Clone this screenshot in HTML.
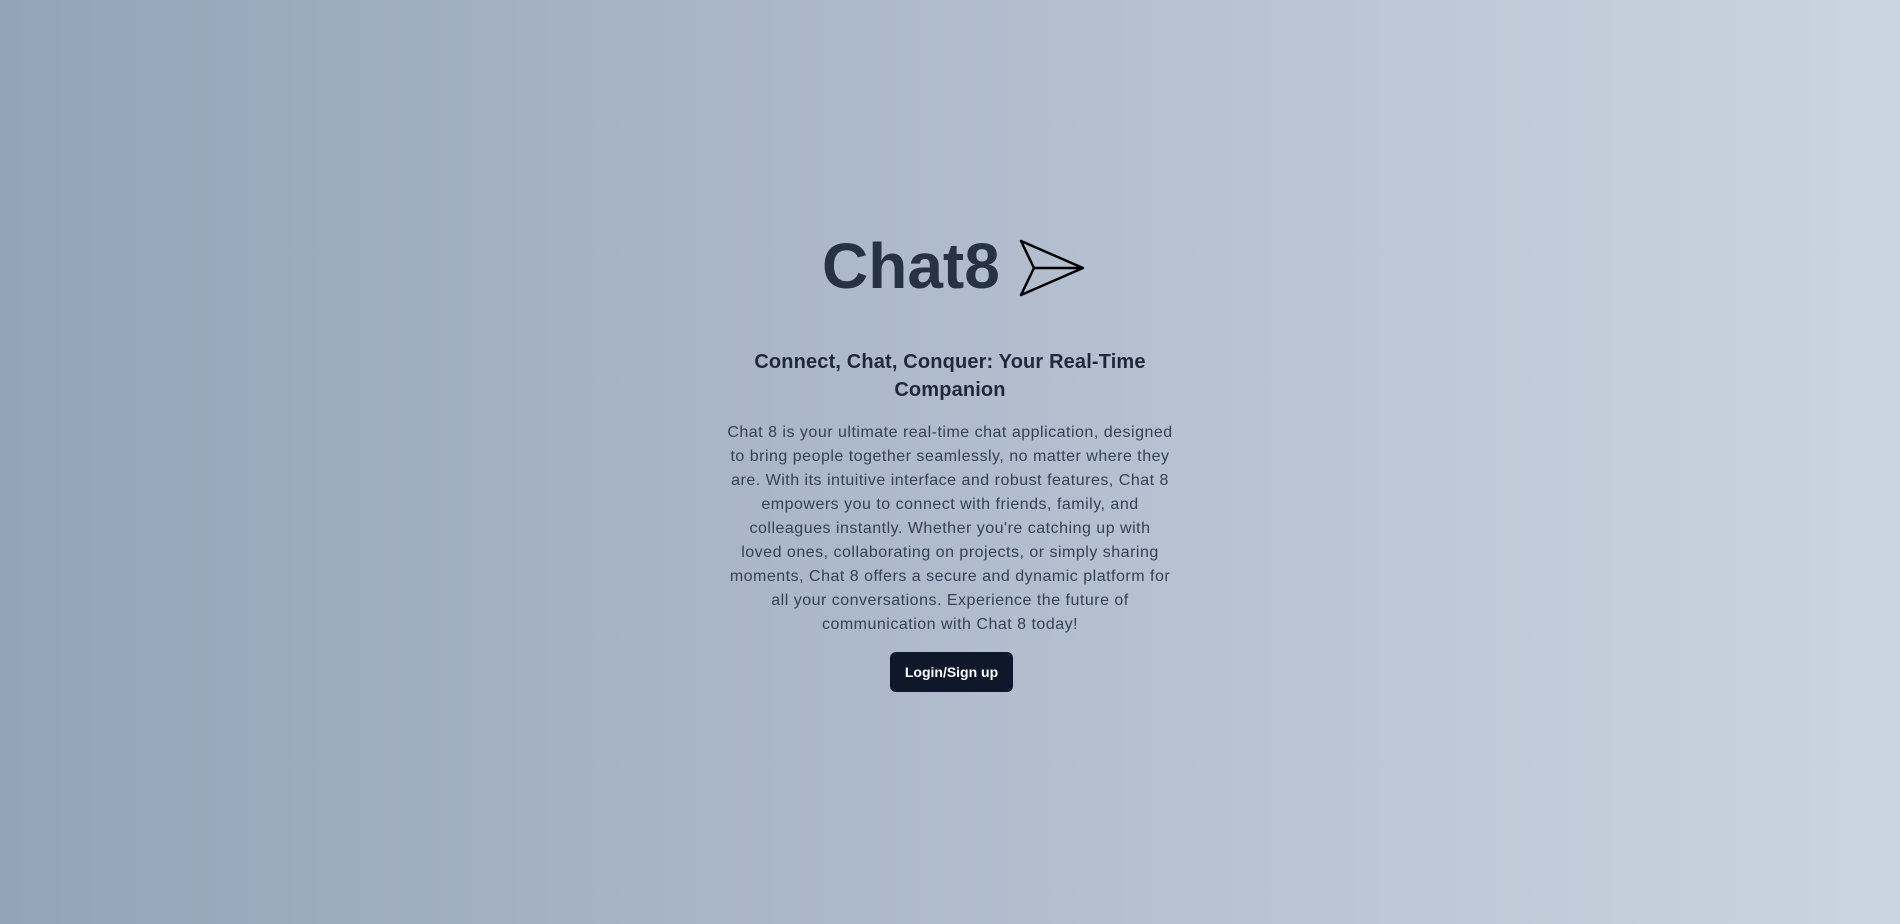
<!DOCTYPE html>
<html><head><meta charset="utf-8"><style>
html,body{margin:0;padding:0;width:1900px;height:924px;overflow:hidden}
body{background:linear-gradient(to right,#94a3b8,#cbd5e1);font-family:"Liberation Sans",sans-serif;position:relative}
.t{position:absolute;left:822px;top:228px;font-size:64px;font-weight:bold;color:#273244;line-height:76px;letter-spacing:0px}
svg{position:absolute;left:0;top:0}
.h{position:absolute;left:0;width:1900px;text-align:center;top:348px;font-size:20px;font-weight:bold;color:#1e293b;line-height:28px;white-space:nowrap;letter-spacing:0.15px}
.p{position:absolute;left:0;width:1900px;text-align:center;top:421px;font-size:16px;color:#334155;line-height:24px;white-space:nowrap;letter-spacing:0.5px}
.b{position:absolute;left:890px;top:652px;width:123px;height:40px;background:#0f172a;border-radius:6px;color:#fff;font-size:14px;font-weight:bold;text-align:center;line-height:40px}
</style></head><body>
<div class="t">Chat8</div>
<svg width="1900" height="924"><path d="M1021 241 L1083 268 L1021 295 L1034 268 Z M1034 268 L1083 268" fill="none" stroke="#000" stroke-width="2.5" stroke-linejoin="round"/></svg>
<div class="h">Connect, Chat, Conquer: Your Real-Time<br>Companion</div>
<div class="p">Chat 8 is your ultimate real-time chat application, designed<br>to bring people together seamlessly, no matter where they<br>are. With its intuitive interface and robust features, Chat 8<br>empowers you to connect with friends, family, and<br>colleagues instantly. Whether you're catching up with<br>loved ones, collaborating on projects, or simply sharing<br>moments, Chat 8 offers a secure and dynamic platform for<br>all your conversations. Experience the future of<br>communication with Chat 8 today!</div>
<div class="b">Login/Sign up</div>
</body></html>
